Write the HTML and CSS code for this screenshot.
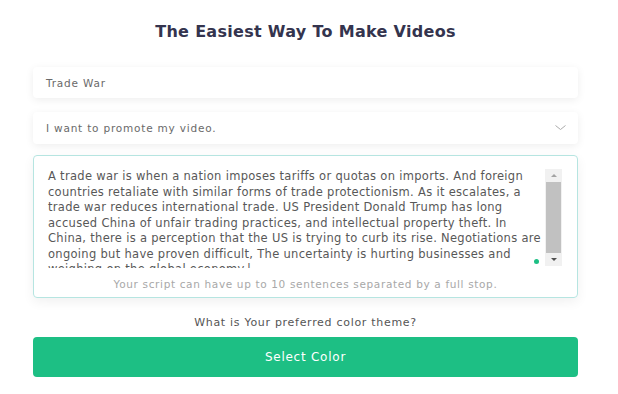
FILE: index.html
```html
<!DOCTYPE html>
<html lang="en">
  <head>
    <meta charset="UTF-8" />
    <meta name="viewport" content="width=device-width, initial-scale=1.0" />
    <link rel="stylesheet" href="styles.css">
  </head>
  <body>
    <div class="maker">
      <h1 class="title">The Easiest Way To Make Videos</h1>

      <div class="field">Trade War</div>

      <div class="field select">
        <span>I want to promote my video.</span>
        <svg class="chevron" width="11" height="6" viewBox="0 0 11 6">
          <path d="M0.5 0.5 L5.5 4.5 L10.5 0.5" fill="none" stroke="#aaa" stroke-width="1" />
        </svg>
      </div>

      <div class="script-box">
        <div class="script-row">
          <div class="script-text">
            A trade war is when a nation imposes tariffs or quotas on imports. And foreign<br>
            countries retaliate with similar forms of trade protectionism. As it escalates, a<br>
            trade war reduces international trade. US President Donald Trump has long<br>
            accused China of unfair trading practices, and intellectual property theft. In<br>
            China, there is a perception that the US is trying to curb its rise. Negotiations are<br>
            ongoing but have proven difficult, The uncertainty is hurting businesses and<br>
            weighing on the global economy.|
          </div>
          <span class="dot"></span>
          <div class="scrollbar">
            <span class="arrow up"></span>
            <span class="thumb"></span>
            <span class="arrow down"></span>
          </div>
        </div>
        <div class="hint">Your script can have up to 10 sentences separated by a full stop.</div>
      </div>

      <div class="question">What is Your preferred color theme?</div>

      <button type="button" class="select-color">Select Color</button>
    </div>
  </body>
</html>
```

FILE: styles.css
```css
body {
  margin: 0;
  background: #ffffff;
  font-family: "DejaVu Sans", sans-serif;
  color: #5b5b66;
}
.maker {
  width: 545px;
  margin-left: 33px;
  padding-top: 22px;
}
.title {
  margin: 0;
  text-align: center;
  font-size: 16px;
  line-height: 20px;
  letter-spacing: 0.3px;
  font-weight: bold;
  color: #34344e;
}
.field {
  margin-top: 25px;
  height: 31px;
  padding: 0 13px;
  display: flex;
  align-items: center;
  font-size: 10.5px;
  letter-spacing: 0.8px;
  color: #6a6a6a;
  background: #fff;
  border-radius: 4px;
  box-shadow: 0 2px 9px rgba(0, 0, 0, 0.07);
}
.select {
  margin-top: 14px;
  height: 32px;
  justify-content: space-between;
  padding-right: 12px;
}
.script-box {
  margin-top: 11px;
  height: 141px;
  border: 1px solid #b6e5e1;
  border-radius: 4px;
  box-shadow: 0 4px 12px rgba(0, 0, 0, 0.06);
  display: flex;
  flex-direction: column;
}
.script-row {
  position: relative;
  display: flex;
  align-items: flex-start;
  margin-top: 13px;
  height: 99px;
}
.script-text {
  flex: 1;
  height: 99px;
  overflow: hidden;
  white-space: nowrap;
  padding-left: 14px;
  font-size: 11.5px;
  line-height: 15.5px;
  letter-spacing: 0.3px;
  color: #585858;
}
.dot {
  position: absolute;
  right: 38px;
  top: 90px;
  width: 5px;
  height: 5px;
  border-radius: 50%;
  background: #1dbf84;
}
.scrollbar {
  width: 17px;
  height: 97px;
  margin-left: 1px;
  margin-right: 15px;
  background: #f1f1f1;
  display: flex;
  flex-direction: column;
  align-items: center;
}
.arrow {
  width: 0;
  height: 0;
  border-left: 3px solid transparent;
  border-right: 3px solid transparent;
  margin: 5px 0;
}
.arrow.up {
  border-bottom: 3px solid #a3a3a3;
}
.arrow.down {
  border-top: 3px solid #505050;
}
.thumb {
  flex: 1;
  width: 15px;
  background: #c1c1c1;
}
.hint {
  text-align: center;
  font-size: 10.5px;
  line-height: 13px;
  letter-spacing: 0.65px;
  color: #a8a8a8;
  margin-top: 10px;
}
.question {
  margin-top: 18px;
  text-align: center;
  font-size: 11px;
  line-height: 14px;
  letter-spacing: 0.7px;
  color: #555;
}
.select-color {
  display: block;
  width: 100%;
  height: 40px;
  margin-top: 7px;
  border: none;
  border-radius: 4px;
  background: #1dbf84;
  color: #fff;
  font-family: "DejaVu Sans", sans-serif;
  font-size: 12px;
  letter-spacing: 0.75px;
  cursor: pointer;
}
```
